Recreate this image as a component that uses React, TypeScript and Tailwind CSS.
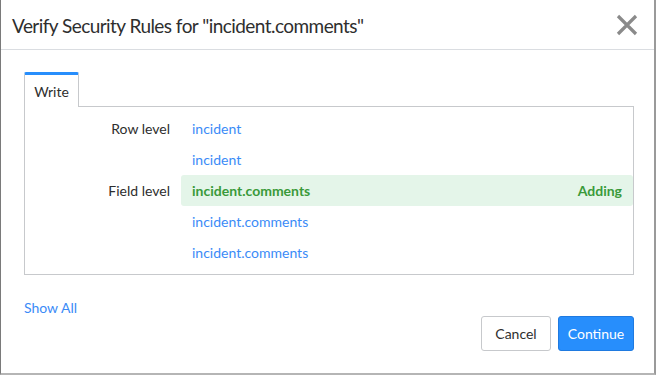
import React from 'react';

const rows = [
  { label: 'Row level', value: 'incident' },
  { label: '', value: 'incident' },
  { label: 'Field level', value: 'incident.comments', status: 'Adding' },
  { label: '', value: 'incident.comments' },
  { label: '', value: 'incident.comments' },
];

export default function App() {
  return (
    <div className="w-[657px] h-[375px] bg-white font-['Lato',sans-serif] text-[#343d47]">
      <div className="w-[656px] h-[375px] border-l border-r-2 border-b-2 border-l-[#7a7a7a] border-r-[#9a9a9a] border-b-[#b5b5b5] flex flex-col">
        {/* header */}
        <div className="h-[50px] border-b border-[#dadde1] flex items-center justify-between pl-[11px] pr-[16px]">
          <h1 className="text-[19px] tracking-[-0.55px] leading-none text-[#2e2e2e] pt-[2px]">Verify Security Rules for "incident.comments"</h1>
          <button className="text-[#8a8a8a]">
            <svg width="22" height="22" viewBox="0 0 22 22" fill="none" stroke="currentColor" strokeWidth="3.2">
              <path d="M2 2 L20 20 M20 2 L2 20" />
            </svg>
          </button>
        </div>

        {/* body */}
        <div className="pt-[22px] pl-[23px]">
          <div className="w-[610px]">
            <div className="flex">
              <div className="w-[55px] h-[35px] border-t-[3px] border-t-[#278efc] border-x border-x-[#c7c9cc] rounded-t-[2px] bg-white flex items-center justify-center text-[14px] text-[#2e2e2e] relative -mb-px z-10">
                Write
              </div>
            </div>
            <div className="border border-[#c7c9cc] pt-[6px] pb-[6px]">
              {rows.map((r, i) => (
                <div key={i} className="flex h-[31px] items-stretch">
                  <div className="w-[156px] pr-[11px] flex items-center justify-end text-[14px] text-[#2e2e2e]">{r.label}</div>
                  <div
                    className={`flex-1 flex items-center justify-between px-[11px] text-[14px] ${
                      r.status ? 'bg-[#e4f5e9] rounded-[3px] text-[#3a9a3a] font-bold' : 'text-[#3b8bf7]'
                    }`}
                  >
                    <span>{r.value}</span>
                    {r.status && <span>{r.status}</span>}
                  </div>
                </div>
              ))}
            </div>

            <div className="mt-[22px] text-[14px] text-[#3b8bf7]">Show All</div>

            <div className="flex justify-end gap-[7px] -mt-[2px]">
              <button className="h-[35px] w-[70px] border border-[#c7c9cc] rounded-[3px] bg-white text-[14px] text-[#2e2e2e]">Cancel</button>
              <button className="h-[35px] w-[76px] border border-[#1f7ae0] rounded-[3px] bg-[#278efc] text-[14px] text-white">Continue</button>
            </div>
          </div>
        </div>
      </div>
    </div>
  );
}
